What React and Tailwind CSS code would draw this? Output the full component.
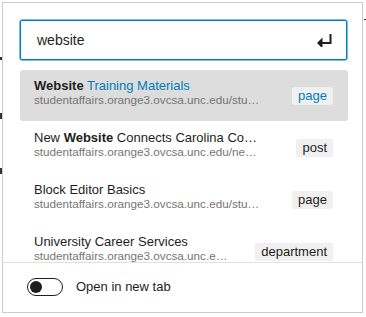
import React from "react";

const rows = [
  { title: [["Website", "b"], [" Training Materials", "blue"]], url: "studentaffairs.orange3.ovcsa.unc.edu/stu…", badge: "page", active: true },
  { title: [["New ", ""], ["Website", "b"], [" Connects Carolina Co…", ""]], url: "studentaffairs.orange3.ovcsa.unc.edu/ne…", badge: "post" },
  { title: [["Block Editor Basics", ""]], url: "studentaffairs.orange3.ovcsa.unc.edu/stu…", badge: "page" },
  { title: [["University Career Services", ""]], url: "studentaffairs.orange3.ovcsa.unc.e…", badge: "department" },
];

function Row({ r }) {
  return (
    <div className={`flex items-center h-[51px] mb-px shrink-0 rounded-[3px] pl-[14px] pr-[15px] ${r.active ? "bg-[#dddddd]" : ""}`}>
      <div className="flex flex-col w-[228px] self-start pt-[8px]">
        <div className="text-[13px] leading-[15px] text-[#1e1e1e] whitespace-nowrap">
          {r.title.map(([t, s], i) => (
            <span key={i} className={s === "b" ? "font-bold" : s === "blue" ? "text-[#007cba]" : ""}>{t}</span>
          ))}
        </div>
        <div className="text-[11.7px] leading-[14px] text-[#757575] whitespace-nowrap">{r.url}</div>
      </div>
      <div className="flex-1" />
      <span className={`h-[18px] px-[6px] flex items-center rounded-[2px] bg-[#f0f0f0] text-[13px] ${r.active ? "text-[#007cba]" : "text-[#1e1e1e]"}`}>{r.badge}</span>
    </div>
  );
}

export default function App() {
  return (
    <div className="relative w-[366px] h-[317px] bg-white overflow-hidden" style={{ fontFamily: '"Liberation Sans", Arial, sans-serif' }}>
      <span className="absolute left-0 top-[57px] w-[2px] h-[3px] bg-[#333]" />
      <span className="absolute left-0 top-[113px] w-[2px] h-[6px] bg-[#333]" />
      <span className="absolute left-0 top-[168px] w-[2px] h-[6px] bg-[#333]" />
      <span className="absolute left-[364px] top-[19px] w-[2px] h-px bg-[#333]" />
      <div className="absolute left-[2px] top-[2px] w-[361px] h-[311px] border border-[#cccccc] bg-white flex flex-col">
        <div className="pt-[17px] pl-[17px] pr-[14px]">
          <div className="h-[40px] w-[327px] border border-[#007cba] rounded-[2px] shadow-[0_0_0_0.5px_#007cba] flex items-center pl-[16px] pr-[13px]">
            <span className="text-[14px] text-[#1e1e1e] flex-1">website</span>
            <svg width="16" height="13" viewBox="0 0 16 13">
              <path d="M13.5 0 V9 H4.5" fill="none" stroke="#1e1e1e" strokeWidth="2" />
              <path d="M0 9 L5.5 3.5 V14.5 Z" fill="#1e1e1e" />
            </svg>
          </div>
        </div>
        <div className="mt-[10px] pl-[17px] pr-[14px] h-[192px] overflow-hidden flex flex-col">
          {rows.map((r, i) => <Row key={i} r={r} />)}
        </div>
        <div className="h-px bg-[#e0e0e0]" />
        <div className="flex-1 flex items-center pl-[24px] pb-[2px]">
          <div className="w-[36px] h-[18px] rounded-full border border-[#1e1e1e] flex items-center pl-[2px]">
            <span className="w-[12px] h-[12px] rounded-full bg-[#1e1e1e]" />
          </div>
          <span className="ml-[13px] text-[13px] text-[#1e1e1e]">Open in new tab</span>
        </div>
      </div>
    </div>
  );
}
